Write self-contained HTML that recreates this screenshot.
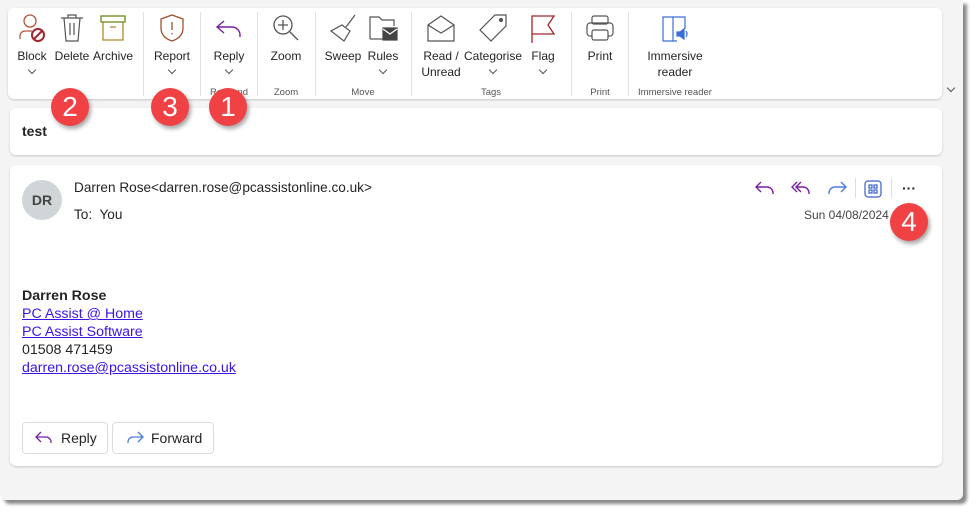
<!DOCTYPE html>
<html><head><meta charset="utf-8"><style>
*{margin:0;padding:0;box-sizing:border-box}
body{width:977px;height:515px;background:#fff;font-family:"Liberation Sans",sans-serif;position:relative;overflow:hidden;color:#242424}
.win{position:absolute;left:0;top:0;width:963px;height:500px;background:#f4f4f4;border-radius:0 0 6px 6px;box-shadow:4px 4px 3px #8a8a8a}
.card{position:absolute;background:#fff;border-radius:6px;box-shadow:0 1px 2px rgba(0,0,0,.18)}
.a{position:absolute}
.lbl{position:absolute;font-size:12px;text-align:center;white-space:nowrap;transform:translateX(-50%);line-height:16px}
.grp{position:absolute;font-size:9.5px;color:#555;transform:translateX(-50%);top:87px}
.sep{position:absolute;top:12px;width:1px;height:84px;background:#e1e1e1}
.chev{position:absolute;width:8px;height:8px;transform:translateX(-50%)}
.chev::after{content:"";position:absolute;left:1px;top:0;width:5px;height:5px;border-right:1px solid #555;border-bottom:1px solid #555;transform:rotate(45deg)}
.ic{position:absolute;transform:translateX(-50%);top:13px}
.badge{position:absolute;width:38px;height:38px;border-radius:50%;background:#f04145;color:#fff;font-size:28px;text-align:center;line-height:38px;box-shadow:2px 3px 4px rgba(0,0,0,.35)}
a{color:#3b14e6;text-decoration:underline}
.btn{position:absolute;top:422px;height:32px;border:1px solid #dcdcdc;border-radius:4px;font-size:14px;line-height:30px}
</style></head><body>
<div class="win"></div>
<div class="card" style="left:8px;top:8px;width:934px;height:91px"></div>
<div class="card" style="left:10px;top:108px;width:932px;height:47px"></div>
<div class="card" style="left:10px;top:165px;width:932px;height:301px"></div>

<svg class="ic" style="left:32px" width="30" height="30" viewBox="0 0 30 30" fill="none" stroke-width="1.3"><circle cx="13" cy="8" r="6" stroke="#b0563a"/><path d="M3 26v-3a5 5 0 0 1 5-5h7" stroke="#b0563a"/><circle cx="21" cy="22" r="6" stroke="#a4262c" stroke-width="2"/><path d="M17 26l8-8" stroke="#a4262c" stroke-width="2"/></svg>
<svg class="ic" style="left:72px" width="28" height="30" viewBox="0 0 28 30" fill="none" stroke="#555" stroke-width="1.2"><path d="M3 5h22M10 5V2h8v3M6 5l2 23h12l2-23M12 10v12M16 10v12"/></svg>
<svg class="ic" style="left:113px" width="28" height="30" viewBox="0 0 28 30" fill="none" stroke-width="1.3"><rect x="2" y="3" width="24" height="6" stroke="#6a8a1a"/><path d="M4 9v18h20V9M11 14h6" stroke="#b08a2a"/></svg>
<svg class="ic" style="left:172px" width="28" height="30" viewBox="0 0 28 30" fill="none" stroke="#a0522d" stroke-width="1.3"><path d="M14 2l11 4v9c0 7-5 11-11 13C8 26 3 22 3 15V6z"/><path d="M14 9v8M14 20v1.5"/></svg>
<svg class="ic" style="left:229px" width="30" height="30" viewBox="0 0 30 30" fill="none" stroke="#7a1fa2" stroke-width="1.4"><path d="M10 8l-7 6 7 6M3 14h15a8 8 0 0 1 8 8v2"/></svg>
<svg class="ic" style="left:286px" width="30" height="30" viewBox="0 0 30 30" fill="none" stroke="#555" stroke-width="1.3"><circle cx="12" cy="12" r="9"/><path d="M12 7v10M7 12h10M19 19l8 8"/></svg>
<svg class="ic" style="left:343px" width="30" height="30" viewBox="0 0 30 30" fill="none" stroke="#555" stroke-width="1.2"><path d="M27 2L18 14M14 12l8 6-6 10-13-10z"/></svg>
<svg class="ic" style="left:383px" width="30" height="30" viewBox="0 0 30 30" fill="none" stroke="#555" stroke-width="1.2"><path d="M2 26V4h9l3 3h12v6"/><path d="M2 26h13"/><rect x="15" y="15" width="14" height="12" fill="#444" stroke="#444"/><path d="M15 16l7 5 7-5" stroke="#fff"/></svg>
<svg class="ic" style="left:441px" width="30" height="30" viewBox="0 0 30 30" fill="none" stroke="#555" stroke-width="1.2"><path d="M2 12v16h26V12L15 3zM2 12l13 8 13-8"/></svg>
<svg class="ic" style="left:493px" width="30" height="30" viewBox="0 0 30 30" fill="none" stroke="#555" stroke-width="1.2"><path d="M17 2h11v11L13 28 2 17z"/><circle cx="23" cy="7" r="1.5" fill="#555"/></svg>
<svg class="ic" style="left:543px" width="26" height="30" viewBox="0 0 26 30" fill="none" stroke="#a4262c" stroke-width="1.3"><path d="M2 30V3h22l-6 9 6 9H2"/></svg>
<svg class="ic" style="left:600px" width="30" height="30" viewBox="0 0 30 30" fill="none" stroke="#555" stroke-width="1.2"><rect x="7" y="3" width="16" height="8" rx="2"/><rect x="2" y="10" width="26" height="13" rx="3"/><rect x="7" y="17" width="16" height="10" rx="2" fill="#fff"/></svg>
<svg class="ic" style="left:675px" width="30" height="30" viewBox="0 0 30 30" fill="none" stroke="#3a6fd8" stroke-width="1.2"><path d="M3 4h10v24H3zM13 4h12v12M13 28h4"/><path d="M17 19h3l4-3v10l-4-3h-3z" fill="#3a6fd8"/><path d="M26 18q2 3 0 6"/></svg>

<div class="lbl" style="left:32px;top:48px">Block</div><div class="chev" style="left:32px;top:67px"></div>
<div class="lbl" style="left:72px;top:48px">Delete</div>
<div class="lbl" style="left:113px;top:48px">Archive</div>
<div class="sep" style="left:143px"></div>
<div class="lbl" style="left:172px;top:48px">Report</div><div class="chev" style="left:172px;top:67px"></div>
<div class="sep" style="left:200px"></div>
<div class="lbl" style="left:229px;top:48px">Reply</div><div class="chev" style="left:229px;top:67px"></div>
<div class="grp" style="left:229px">Respond</div>
<div class="sep" style="left:257px"></div>
<div class="lbl" style="left:286px;top:48px">Zoom</div><div class="grp" style="left:286px">Zoom</div>
<div class="sep" style="left:315px"></div>
<div class="lbl" style="left:343px;top:48px">Sweep</div>
<div class="lbl" style="left:383px;top:48px">Rules</div><div class="chev" style="left:383px;top:67px"></div>
<div class="grp" style="left:363px">Move</div>
<div class="sep" style="left:411px"></div>
<div class="lbl" style="left:441px;top:48px">Read /<br>Unread</div>
<div class="lbl" style="left:493px;top:48px">Categorise</div><div class="chev" style="left:493px;top:67px"></div>
<div class="lbl" style="left:543px;top:48px">Flag</div><div class="chev" style="left:543px;top:67px"></div>
<div class="grp" style="left:491px">Tags</div>
<div class="sep" style="left:571px"></div>
<div class="lbl" style="left:600px;top:48px">Print</div><div class="grp" style="left:600px">Print</div>
<div class="sep" style="left:628px"></div>
<div class="lbl" style="left:675px;top:48px">Immersive<br>reader</div><div class="grp" style="left:675px">Immersive reader</div>
<div class="chev" style="left:951px;top:85px"></div>

<div class="a" style="left:22px;top:123px;font-size:14px;font-weight:bold">test</div>

<div class="a" style="left:22px;top:180px;width:40px;height:40px;border-radius:50%;background:#d0d5d8;color:#444;font-size:14px;font-weight:bold;text-align:center;line-height:40px">DR</div>
<div class="a" style="left:74px;top:180px;font-size:13.6px">Darren Rose&lt;darren.rose@pcassistonline.co.uk&gt;</div>
<div class="a" style="left:74px;top:207px;font-size:13.6px">To:&nbsp; You</div>
<div class="a" style="left:804px;top:208px;font-size:12px;color:#444">Sun 04/08/2024</div>

<svg class="a" style="left:754px;top:179px" width="22" height="18" viewBox="0 0 22 18" fill="none" stroke="#7a1fa2" stroke-width="1.4"><path d="M7 3L2 8l5 5M2 8h11a6 6 0 0 1 6 6v1"/></svg>
<svg class="a" style="left:790px;top:179px" width="22" height="18" viewBox="0 0 22 18" fill="none" stroke="#7a1fa2" stroke-width="1.4"><path d="M7 3L2 8l5 5M11 3L6 8l5 5M6 8h7a6 6 0 0 1 6 6v1"/></svg>
<svg class="a" style="left:826px;top:179px" width="22" height="18" viewBox="0 0 22 18" fill="none" stroke="#4a7de0" stroke-width="1.4"><path d="M15 3l5 5-5 5M20 8H9a6 6 0 0 0-6 6v1"/></svg>
<div class="a" style="left:855px;top:178px;width:1px;height:20px;background:#ddd"></div>
<svg class="a" style="left:864px;top:180px" width="18" height="18" viewBox="0 0 18 18" fill="none" stroke="#3a5fc8" stroke-width="1.2"><rect x="1" y="1" width="16" height="16" rx="3"/><rect x="5" y="5" width="3" height="3"/><rect x="10" y="5" width="3" height="3"/><rect x="5" y="10" width="3" height="3"/><rect x="10" y="10" width="3" height="3"/></svg>
<div class="a" style="left:891px;top:178px;width:1px;height:20px;background:#ddd"></div>
<div class="a" style="left:902px;top:180px;font-size:14px;font-weight:bold">···</div>

<div class="a" style="left:22px;top:287px;font-size:14.2px;line-height:18px"><b>Darren Rose</b><br><a>PC Assist @ Home</a><br><a>PC Assist Software</a><br>01508 471459<br><a>darren.rose@pcassistonline.co.uk</a></div>

<div class="btn" style="left:22px;width:86px"><svg class="a" style="left:12px;top:8px" width="18" height="14" viewBox="0 0 18 14" fill="none" stroke="#7a1fa2" stroke-width="1.3"><path d="M6 1L1 6l5 5M1 6h10a5 5 0 0 1 5 5v1"/></svg><span class="a" style="left:38px">Reply</span></div>
<div class="btn" style="left:112px;width:102px"><svg class="a" style="left:13px;top:8px" width="18" height="14" viewBox="0 0 18 14" fill="none" stroke="#4a7de0" stroke-width="1.3"><path d="M12 1l5 5-5 5M17 6H7a5 5 0 0 0-5 5v1"/></svg><span class="a" style="left:38px">Forward</span></div>

<div class="badge" style="left:51px;top:88px">2</div>
<div class="badge" style="left:151px;top:88px">3</div>
<div class="badge" style="left:209px;top:88px">1</div>
<div class="badge" style="left:890px;top:203px">4</div>
</body></html>
